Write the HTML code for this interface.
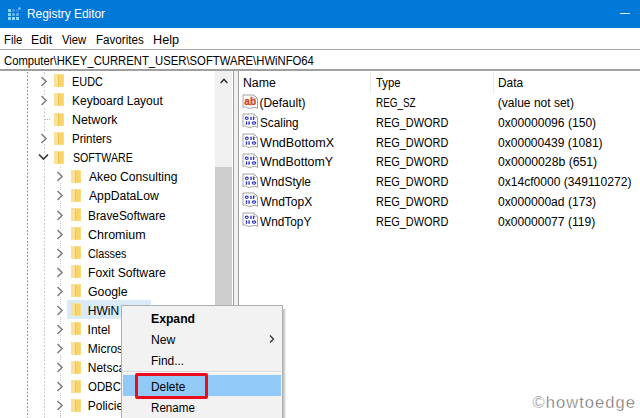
<!DOCTYPE html>
<html><head><meta charset="utf-8"><style>
html,body{margin:0;padding:0;}
body{width:640px;height:418px;overflow:hidden;position:relative;background:#fff;font-family:"Liberation Sans",sans-serif;}
.t{position:absolute;font-family:"Liberation Sans",sans-serif;font-size:12px;line-height:14px;white-space:nowrap;transform-origin:0 0;}
</style></head><body>
<div style="position:absolute;left:0px;top:0px;width:640px;height:28px;background:#0078d7;"></div>
<svg style="position:absolute;left:7px;top:7px" width="18" height="16" viewBox="0 0 18 16"><rect x="1" y="2" width="3" height="3" fill="#86d4fd"/><rect x="5" y="2" width="3" height="3" fill="#3a96e4"/><rect x="9" y="2" width="3" height="3" fill="#2c88de"/><rect x="1" y="6" width="3" height="3" fill="#86d4fd"/><rect x="5" y="6" width="3" height="3" fill="#56acec"/><rect x="9" y="6" width="3" height="3" fill="#56acec"/><rect x="1" y="10" width="3" height="3" fill="#8ad8ff"/><rect x="5" y="10" width="3" height="3" fill="#8ad8ff"/><rect x="9" y="10" width="3" height="3" fill="#8ad8ff"/><circle cx="12.5" cy="1.5" r="1.3" fill="#7cc0f6"/></svg>
<div class="t" style="left:26.52px;top:7.30px;color:#fff;transform:scaleX(0.9922);">Registry Editor</div>
<div style="position:absolute;left:620px;top:13px;width:10px;height:1px;background:#dff2ff;"></div>
<div class="t" style="left:3.77px;top:33.00px;color:#000;transform:scaleX(0.9428);">File</div>
<div class="t" style="left:30.90px;top:33.00px;color:#000;transform:scaleX(1.0201);">Edit</div>
<div class="t" style="left:61.55px;top:33.00px;color:#000;transform:scaleX(0.9390);">View</div>
<div class="t" style="left:95.75px;top:33.00px;color:#000;transform:scaleX(0.9681);">Favorites</div>
<div class="t" style="left:152.76px;top:33.00px;color:#000;transform:scaleX(1.0564);">Help</div>
<div style="position:absolute;left:0px;top:49px;width:640px;height:1px;background:#a9a9a9;"></div>
<div class="t" style="left:4.43px;top:54.00px;color:#000;transform:scaleX(0.9402);">Computer\HKEY_CURRENT_USER\SOFTWARE\HWiNFO64</div>
<div style="position:absolute;left:0px;top:69px;width:640px;height:2px;background:#a0a0a0;"></div>
<div style="position:absolute;left:27px;top:71px;width:1px;height:347px;background:linear-gradient(to bottom,transparent 0 0.5px,#8c8c8c 0.5px 2.5px,transparent 2.5px) 0 0/1px 3.6px repeat-y"></div>
<div style="position:absolute;left:44px;top:71px;width:1px;height:347px;background:linear-gradient(to bottom,transparent 0 1px,#c4c4c4 1px 2.5px,transparent 2.5px) 0 0/1px 3.6px repeat-y"></div>
<div style="position:absolute;left:60px;top:167px;width:1px;height:251px;background:repeating-linear-gradient(to bottom,#c4c4c4 0 1px,transparent 1px 2px)"></div>
<div style="position:absolute;left:45px;top:119px;width:6px;height:1px;background:repeating-linear-gradient(to right,#b0b0b0 0 1px,transparent 1px 2px)"></div>
<svg style="position:absolute;left:40px;top:76.0px" width="8" height="11" viewBox="0 0 8 11"><rect width="8" height="11" fill="#fff"/><path d="M1.5 1 L6 5.5 L1.5 10" fill="none" stroke="#808080" stroke-width="1.6"/></svg>
<svg style="position:absolute;left:54px;top:74.4px" width="10" height="14" viewBox="0 0 10 14"><rect x="0" y="0" width="10" height="13" fill="#fbe196"/><rect x="4" y="1" width="5.5" height="11.5" fill="#f7d569"/><rect x="4" y="1" width="1" height="11.5" fill="#ecc55a"/></svg>
<div class="t" style="left:72.11px;top:75.00px;color:#000;transform:scaleX(0.9075);">EUDC</div>
<svg style="position:absolute;left:40px;top:95.08px" width="8" height="11" viewBox="0 0 8 11"><rect width="8" height="11" fill="#fff"/><path d="M1.5 1 L6 5.5 L1.5 10" fill="none" stroke="#808080" stroke-width="1.6"/></svg>
<svg style="position:absolute;left:54px;top:93.48px" width="10" height="14" viewBox="0 0 10 14"><rect x="0" y="0" width="10" height="13" fill="#fbe196"/><rect x="4" y="1" width="5.5" height="11.5" fill="#f7d569"/><rect x="4" y="1" width="1" height="11.5" fill="#ecc55a"/></svg>
<div class="t" style="left:72.02px;top:94.08px;color:#000;">Keyboard Layout</div>
<svg style="position:absolute;left:54px;top:112.56px" width="10" height="14" viewBox="0 0 10 14"><rect x="0" y="0" width="10" height="13" fill="#fbe196"/><rect x="4" y="1" width="5.5" height="11.5" fill="#f7d569"/><rect x="4" y="1" width="1" height="11.5" fill="#ecc55a"/></svg>
<div class="t" style="left:71.98px;top:113.16px;color:#000;transform:scaleX(1.0339);">Network</div>
<svg style="position:absolute;left:40px;top:133.24px" width="8" height="11" viewBox="0 0 8 11"><rect width="8" height="11" fill="#fff"/><path d="M1.5 1 L6 5.5 L1.5 10" fill="none" stroke="#808080" stroke-width="1.6"/></svg>
<svg style="position:absolute;left:54px;top:131.64000000000001px" width="10" height="14" viewBox="0 0 10 14"><rect x="0" y="0" width="10" height="13" fill="#fbe196"/><rect x="4" y="1" width="5.5" height="11.5" fill="#f7d569"/><rect x="4" y="1" width="1" height="11.5" fill="#ecc55a"/></svg>
<div class="t" style="left:72.06px;top:132.24px;color:#000;transform:scaleX(0.9593);">Printers</div>
<svg style="position:absolute;left:38px;top:152.82px" width="11" height="8" viewBox="0 0 11 8"><rect width="11" height="8" fill="#fff"/><path d="M1 1.5 L5.5 6 L10 1.5" fill="none" stroke="#333" stroke-width="1.6"/></svg>
<svg style="position:absolute;left:54px;top:150.72px" width="10" height="14" viewBox="0 0 10 14"><rect x="0" y="0" width="10" height="13" fill="#fbe196"/><rect x="4" y="1" width="5.5" height="11.5" fill="#f7d569"/><rect x="4" y="1" width="1" height="11.5" fill="#ecc55a"/></svg>
<div class="t" style="left:72.52px;top:151.32px;color:#000;transform:scaleX(0.8859);">SOFTWARE</div>
<svg style="position:absolute;left:56px;top:171.39999999999998px" width="8" height="11" viewBox="0 0 8 11"><rect width="8" height="11" fill="#fff"/><path d="M1.5 1 L6 5.5 L1.5 10" fill="none" stroke="#808080" stroke-width="1.6"/></svg>
<svg style="position:absolute;left:71px;top:169.79999999999998px" width="10" height="14" viewBox="0 0 10 14"><rect x="0" y="0" width="10" height="13" fill="#fbe196"/><rect x="4" y="1" width="5.5" height="11.5" fill="#f7d569"/><rect x="4" y="1" width="1" height="11.5" fill="#ecc55a"/></svg>
<div class="t" style="left:88.68px;top:170.40px;color:#000;transform:scaleX(1.0128);">Akeo Consulting</div>
<svg style="position:absolute;left:56px;top:190.48px" width="8" height="11" viewBox="0 0 8 11"><rect width="8" height="11" fill="#fff"/><path d="M1.5 1 L6 5.5 L1.5 10" fill="none" stroke="#808080" stroke-width="1.6"/></svg>
<svg style="position:absolute;left:71px;top:188.88px" width="10" height="14" viewBox="0 0 10 14"><rect x="0" y="0" width="10" height="13" fill="#fbe196"/><rect x="4" y="1" width="5.5" height="11.5" fill="#f7d569"/><rect x="4" y="1" width="1" height="11.5" fill="#ecc55a"/></svg>
<div class="t" style="left:88.68px;top:189.48px;color:#000;transform:scaleX(1.0143);">AppDataLow</div>
<svg style="position:absolute;left:56px;top:209.56px" width="8" height="11" viewBox="0 0 8 11"><rect width="8" height="11" fill="#fff"/><path d="M1.5 1 L6 5.5 L1.5 10" fill="none" stroke="#808080" stroke-width="1.6"/></svg>
<svg style="position:absolute;left:71px;top:207.96px" width="10" height="14" viewBox="0 0 10 14"><rect x="0" y="0" width="10" height="13" fill="#fbe196"/><rect x="4" y="1" width="5.5" height="11.5" fill="#f7d569"/><rect x="4" y="1" width="1" height="11.5" fill="#ecc55a"/></svg>
<div class="t" style="left:87.73px;top:208.56px;color:#000;transform:scaleX(0.9872);">BraveSoftware</div>
<svg style="position:absolute;left:56px;top:228.64px" width="8" height="11" viewBox="0 0 8 11"><rect width="8" height="11" fill="#fff"/><path d="M1.5 1 L6 5.5 L1.5 10" fill="none" stroke="#808080" stroke-width="1.6"/></svg>
<svg style="position:absolute;left:71px;top:227.04px" width="10" height="14" viewBox="0 0 10 14"><rect x="0" y="0" width="10" height="13" fill="#fbe196"/><rect x="4" y="1" width="5.5" height="11.5" fill="#f7d569"/><rect x="4" y="1" width="1" height="11.5" fill="#ecc55a"/></svg>
<div class="t" style="left:88.07px;top:227.64px;color:#000;transform:scaleX(1.0419);">Chromium</div>
<svg style="position:absolute;left:56px;top:247.71999999999997px" width="8" height="11" viewBox="0 0 8 11"><rect width="8" height="11" fill="#fff"/><path d="M1.5 1 L6 5.5 L1.5 10" fill="none" stroke="#808080" stroke-width="1.6"/></svg>
<svg style="position:absolute;left:71px;top:246.11999999999998px" width="10" height="14" viewBox="0 0 10 14"><rect x="0" y="0" width="10" height="13" fill="#fbe196"/><rect x="4" y="1" width="5.5" height="11.5" fill="#f7d569"/><rect x="4" y="1" width="1" height="11.5" fill="#ecc55a"/></svg>
<div class="t" style="left:88.15px;top:246.72px;color:#000;transform:scaleX(0.9006);">Classes</div>
<svg style="position:absolute;left:56px;top:266.79999999999995px" width="8" height="11" viewBox="0 0 8 11"><rect width="8" height="11" fill="#fff"/><path d="M1.5 1 L6 5.5 L1.5 10" fill="none" stroke="#808080" stroke-width="1.6"/></svg>
<svg style="position:absolute;left:71px;top:265.19999999999993px" width="10" height="14" viewBox="0 0 10 14"><rect x="0" y="0" width="10" height="13" fill="#fbe196"/><rect x="4" y="1" width="5.5" height="11.5" fill="#f7d569"/><rect x="4" y="1" width="1" height="11.5" fill="#ecc55a"/></svg>
<div class="t" style="left:87.70px;top:265.80px;color:#000;transform:scaleX(1.0136);">Foxit Software</div>
<svg style="position:absolute;left:56px;top:285.88px" width="8" height="11" viewBox="0 0 8 11"><rect width="8" height="11" fill="#fff"/><path d="M1.5 1 L6 5.5 L1.5 10" fill="none" stroke="#808080" stroke-width="1.6"/></svg>
<svg style="position:absolute;left:71px;top:284.28px" width="10" height="14" viewBox="0 0 10 14"><rect x="0" y="0" width="10" height="13" fill="#fbe196"/><rect x="4" y="1" width="5.5" height="11.5" fill="#f7d569"/><rect x="4" y="1" width="1" height="11.5" fill="#ecc55a"/></svg>
<div class="t" style="left:88.08px;top:284.88px;color:#000;transform:scaleX(1.0251);">Google</div>
<div style="position:absolute;left:67px;top:300px;width:84px;height:19px;background:#d9ebf9;"></div>
<svg style="position:absolute;left:56px;top:304.96px" width="8" height="11" viewBox="0 0 8 11"><rect width="8" height="11" fill="#fff"/><path d="M1.5 1 L6 5.5 L1.5 10" fill="none" stroke="#808080" stroke-width="1.6"/></svg>
<svg style="position:absolute;left:71px;top:303.35999999999996px" width="10" height="14" viewBox="0 0 10 14"><rect x="0" y="0" width="10" height="13" fill="#fbe196"/><rect x="4" y="1" width="5.5" height="11.5" fill="#f7d569"/><rect x="4" y="1" width="1" height="11.5" fill="#ecc55a"/></svg>
<div class="t" style="left:87.72px;top:303.96px;color:#000;">HWiN</div>
<svg style="position:absolute;left:56px;top:324.03999999999996px" width="8" height="11" viewBox="0 0 8 11"><rect width="8" height="11" fill="#fff"/><path d="M1.5 1 L6 5.5 L1.5 10" fill="none" stroke="#808080" stroke-width="1.6"/></svg>
<svg style="position:absolute;left:71px;top:322.43999999999994px" width="10" height="14" viewBox="0 0 10 14"><rect x="0" y="0" width="10" height="13" fill="#fbe196"/><rect x="4" y="1" width="5.5" height="11.5" fill="#f7d569"/><rect x="4" y="1" width="1" height="11.5" fill="#ecc55a"/></svg>
<div class="t" style="left:87.59px;top:323.04px;color:#000;">Intel</div>
<svg style="position:absolute;left:56px;top:343.12px" width="8" height="11" viewBox="0 0 8 11"><rect width="8" height="11" fill="#fff"/><path d="M1.5 1 L6 5.5 L1.5 10" fill="none" stroke="#808080" stroke-width="1.6"/></svg>
<svg style="position:absolute;left:71px;top:341.52px" width="10" height="14" viewBox="0 0 10 14"><rect x="0" y="0" width="10" height="13" fill="#fbe196"/><rect x="4" y="1" width="5.5" height="11.5" fill="#f7d569"/><rect x="4" y="1" width="1" height="11.5" fill="#ecc55a"/></svg>
<div class="t" style="left:87.72px;top:342.12px;color:#000;">Microsoft</div>
<svg style="position:absolute;left:56px;top:362.2px" width="8" height="11" viewBox="0 0 8 11"><rect width="8" height="11" fill="#fff"/><path d="M1.5 1 L6 5.5 L1.5 10" fill="none" stroke="#808080" stroke-width="1.6"/></svg>
<svg style="position:absolute;left:71px;top:360.59999999999997px" width="10" height="14" viewBox="0 0 10 14"><rect x="0" y="0" width="10" height="13" fill="#fbe196"/><rect x="4" y="1" width="5.5" height="11.5" fill="#f7d569"/><rect x="4" y="1" width="1" height="11.5" fill="#ecc55a"/></svg>
<div class="t" style="left:87.72px;top:361.20px;color:#000;">Netscape</div>
<svg style="position:absolute;left:56px;top:381.28px" width="8" height="11" viewBox="0 0 8 11"><rect width="8" height="11" fill="#fff"/><path d="M1.5 1 L6 5.5 L1.5 10" fill="none" stroke="#808080" stroke-width="1.6"/></svg>
<svg style="position:absolute;left:71px;top:379.67999999999995px" width="10" height="14" viewBox="0 0 10 14"><rect x="0" y="0" width="10" height="13" fill="#fbe196"/><rect x="4" y="1" width="5.5" height="11.5" fill="#f7d569"/><rect x="4" y="1" width="1" height="11.5" fill="#ecc55a"/></svg>
<div class="t" style="left:88.16px;top:380.28px;color:#000;transform:scaleX(0.9511);">ODBC</div>
<svg style="position:absolute;left:56px;top:400.35999999999996px" width="8" height="11" viewBox="0 0 8 11"><rect width="8" height="11" fill="#fff"/><path d="M1.5 1 L6 5.5 L1.5 10" fill="none" stroke="#808080" stroke-width="1.6"/></svg>
<svg style="position:absolute;left:71px;top:398.75999999999993px" width="10" height="14" viewBox="0 0 10 14"><rect x="0" y="0" width="10" height="13" fill="#fbe196"/><rect x="4" y="1" width="5.5" height="11.5" fill="#f7d569"/><rect x="4" y="1" width="1" height="11.5" fill="#ecc55a"/></svg>
<div class="t" style="left:87.72px;top:399.36px;color:#000;">Policies</div>
<svg style="position:absolute;left:56px;top:419.43999999999994px" width="8" height="11" viewBox="0 0 8 11"><rect width="8" height="11" fill="#fff"/><path d="M1.5 1 L6 5.5 L1.5 10" fill="none" stroke="#808080" stroke-width="1.6"/></svg>
<svg style="position:absolute;left:71px;top:417.8399999999999px" width="10" height="14" viewBox="0 0 10 14"><rect x="0" y="0" width="10" height="13" fill="#fbe196"/><rect x="4" y="1" width="5.5" height="11.5" fill="#f7d569"/><rect x="4" y="1" width="1" height="11.5" fill="#ecc55a"/></svg>
<div class="t" style="left:88.13px;top:418.44px;color:#000;">Qt</div>
<div style="position:absolute;left:215px;top:71px;width:17px;height:347px;background:#f0f0f0;"></div>
<div style="position:absolute;left:215px;top:167px;width:17px;height:251px;background:#cdcdcd;"></div>
<svg style="position:absolute;left:218px;top:77px" width="12" height="8" viewBox="0 0 12 8"><path d="M2.6 6 L6 2.4 L9.4 6" fill="none" stroke="#333" stroke-width="1.5"/></svg>
<div style="position:absolute;left:233px;top:71px;width:1px;height:347px;background:#a0a0a0;"></div>
<div style="position:absolute;left:234px;top:71px;width:4px;height:347px;background:#f0f0f0;"></div>
<div style="position:absolute;left:238px;top:71px;width:1px;height:347px;background:#a0a0a0;"></div>
<div class="t" style="left:242.79px;top:76.00px;color:#000;transform:scaleX(1.0232);">Name</div>
<div style="position:absolute;left:370px;top:72px;width:1px;height:22px;background:#ebebeb;"></div>
<div class="t" style="left:376.00px;top:76.00px;color:#000;transform:scaleX(0.9411);">Type</div>
<div style="position:absolute;left:493px;top:72px;width:1px;height:22px;background:#ebebeb;"></div>
<div class="t" style="left:498.03px;top:76.00px;color:#000;transform:scaleX(0.9892);">Data</div>
<svg style="position:absolute;left:241.5px;top:93.70px" width="17" height="17" viewBox="0 0 17 17"><path d="M1 1 H12 L15.5 4.5 V14.5 Q14 13.2 12.5 13.4 Q10 13.8 8 14.4 Q5.5 14.6 3.5 13 Q2.2 12.6 1 13.4 Z" fill="#fff" stroke="#a4a4a4" stroke-width="1"/><path d="M12 1 V4.5 H15.5" fill="none" stroke="#b8b8b8" stroke-width="0.8"/><text x="2.3" y="10.8" font-family="Liberation Sans" font-weight="bold" font-size="10.5" fill="#d0462a" stroke="#d0462a" stroke-width="0.3" textLength="12" lengthAdjust="spacingAndGlyphs">ab</text></svg>
<div class="t" style="left:259.46px;top:96.00px;color:#000;">(Default)</div>
<div class="t" style="left:375.89px;top:96.00px;color:#000;transform:scaleX(0.8231);">REG_SZ</div>
<div class="t" style="left:497.86px;top:96.00px;color:#000;">(value not set)</div>
<svg style="position:absolute;left:241.5px;top:113.40px" width="17" height="17" viewBox="0 0 17 17"><path d="M1 1 H12 L15.5 4.5 V14.5 Q14 13.2 12.5 13.4 Q10 13.8 8 14.4 Q5.5 14.6 3.5 13 Q2.2 12.6 1 13.4 Z" fill="#fff" stroke="#a4a4a4" stroke-width="1"/><path d="M12 1 V4.5 H15.5" fill="none" stroke="#b8b8b8" stroke-width="0.8"/><ellipse cx="4.75" cy="5.3" rx="1.5" ry="1.2" fill="none" stroke="#2f35c2" stroke-width="1.1"/><rect x="8.3" y="3.7" width="1.4" height="3.3" fill="#2f35c2"/><rect x="10.9" y="3.7" width="1.4" height="3.3" fill="#2f35c2"/><rect x="3.8" y="8.4" width="1.4" height="3.4" fill="#2f35c2"/><rect x="6.4" y="8.4" width="1.4" height="3.4" fill="#2f35c2"/><ellipse cx="12" cy="10.1" rx="1.75" ry="1.2" fill="none" stroke="#2f35c2" stroke-width="1.1"/></svg>
<div class="t" style="left:259.67px;top:116.00px;color:#000;transform:scaleX(0.9806);">Scaling</div>
<div class="t" style="left:375.80px;top:116.00px;color:#000;transform:scaleX(0.9116);">REG_DWORD</div>
<div class="t" style="left:498.13px;top:116.00px;color:#000;transform:scaleX(1.0073);">0x00000096 (150)</div>
<svg style="position:absolute;left:241.5px;top:133.10px" width="17" height="17" viewBox="0 0 17 17"><path d="M1 1 H12 L15.5 4.5 V14.5 Q14 13.2 12.5 13.4 Q10 13.8 8 14.4 Q5.5 14.6 3.5 13 Q2.2 12.6 1 13.4 Z" fill="#fff" stroke="#a4a4a4" stroke-width="1"/><path d="M12 1 V4.5 H15.5" fill="none" stroke="#b8b8b8" stroke-width="0.8"/><ellipse cx="4.75" cy="5.3" rx="1.5" ry="1.2" fill="none" stroke="#2f35c2" stroke-width="1.1"/><rect x="8.3" y="3.7" width="1.4" height="3.3" fill="#2f35c2"/><rect x="10.9" y="3.7" width="1.4" height="3.3" fill="#2f35c2"/><rect x="3.8" y="8.4" width="1.4" height="3.4" fill="#2f35c2"/><rect x="6.4" y="8.4" width="1.4" height="3.4" fill="#2f35c2"/><ellipse cx="12" cy="10.1" rx="1.75" ry="1.2" fill="none" stroke="#2f35c2" stroke-width="1.1"/></svg>
<div class="t" style="left:260.14px;top:136.00px;color:#000;transform:scaleX(1.0485);">WndBottomX</div>
<div class="t" style="left:375.80px;top:136.00px;color:#000;transform:scaleX(0.9116);">REG_DWORD</div>
<div class="t" style="left:498.13px;top:136.00px;color:#000;transform:scaleX(1.0051);">0x00000439 (1081)</div>
<svg style="position:absolute;left:241.5px;top:152.80px" width="17" height="17" viewBox="0 0 17 17"><path d="M1 1 H12 L15.5 4.5 V14.5 Q14 13.2 12.5 13.4 Q10 13.8 8 14.4 Q5.5 14.6 3.5 13 Q2.2 12.6 1 13.4 Z" fill="#fff" stroke="#a4a4a4" stroke-width="1"/><path d="M12 1 V4.5 H15.5" fill="none" stroke="#b8b8b8" stroke-width="0.8"/><ellipse cx="4.75" cy="5.3" rx="1.5" ry="1.2" fill="none" stroke="#2f35c2" stroke-width="1.1"/><rect x="8.3" y="3.7" width="1.4" height="3.3" fill="#2f35c2"/><rect x="10.9" y="3.7" width="1.4" height="3.3" fill="#2f35c2"/><rect x="3.8" y="8.4" width="1.4" height="3.4" fill="#2f35c2"/><rect x="6.4" y="8.4" width="1.4" height="3.4" fill="#2f35c2"/><ellipse cx="12" cy="10.1" rx="1.75" ry="1.2" fill="none" stroke="#2f35c2" stroke-width="1.1"/></svg>
<div class="t" style="left:260.15px;top:155.00px;color:#000;transform:scaleX(1.0344);">WndBottomY</div>
<div class="t" style="left:375.80px;top:155.00px;color:#000;transform:scaleX(0.9116);">REG_DWORD</div>
<div class="t" style="left:498.12px;top:155.00px;color:#000;transform:scaleX(1.0177);">0x0000028b (651)</div>
<svg style="position:absolute;left:241.5px;top:172.50px" width="17" height="17" viewBox="0 0 17 17"><path d="M1 1 H12 L15.5 4.5 V14.5 Q14 13.2 12.5 13.4 Q10 13.8 8 14.4 Q5.5 14.6 3.5 13 Q2.2 12.6 1 13.4 Z" fill="#fff" stroke="#a4a4a4" stroke-width="1"/><path d="M12 1 V4.5 H15.5" fill="none" stroke="#b8b8b8" stroke-width="0.8"/><ellipse cx="4.75" cy="5.3" rx="1.5" ry="1.2" fill="none" stroke="#2f35c2" stroke-width="1.1"/><rect x="8.3" y="3.7" width="1.4" height="3.3" fill="#2f35c2"/><rect x="10.9" y="3.7" width="1.4" height="3.3" fill="#2f35c2"/><rect x="3.8" y="8.4" width="1.4" height="3.4" fill="#2f35c2"/><rect x="6.4" y="8.4" width="1.4" height="3.4" fill="#2f35c2"/><ellipse cx="12" cy="10.1" rx="1.75" ry="1.2" fill="none" stroke="#2f35c2" stroke-width="1.1"/></svg>
<div class="t" style="left:260.15px;top:175.00px;color:#000;transform:scaleX(0.9908);">WndStyle</div>
<div class="t" style="left:375.80px;top:175.00px;color:#000;transform:scaleX(0.9116);">REG_DWORD</div>
<div class="t" style="left:498.13px;top:175.00px;color:#000;transform:scaleX(1.0066);">0x14cf0000 (349110272)</div>
<svg style="position:absolute;left:241.5px;top:192.20px" width="17" height="17" viewBox="0 0 17 17"><path d="M1 1 H12 L15.5 4.5 V14.5 Q14 13.2 12.5 13.4 Q10 13.8 8 14.4 Q5.5 14.6 3.5 13 Q2.2 12.6 1 13.4 Z" fill="#fff" stroke="#a4a4a4" stroke-width="1"/><path d="M12 1 V4.5 H15.5" fill="none" stroke="#b8b8b8" stroke-width="0.8"/><ellipse cx="4.75" cy="5.3" rx="1.5" ry="1.2" fill="none" stroke="#2f35c2" stroke-width="1.1"/><rect x="8.3" y="3.7" width="1.4" height="3.3" fill="#2f35c2"/><rect x="10.9" y="3.7" width="1.4" height="3.3" fill="#2f35c2"/><rect x="3.8" y="8.4" width="1.4" height="3.4" fill="#2f35c2"/><rect x="6.4" y="8.4" width="1.4" height="3.4" fill="#2f35c2"/><ellipse cx="12" cy="10.1" rx="1.75" ry="1.2" fill="none" stroke="#2f35c2" stroke-width="1.1"/></svg>
<div class="t" style="left:260.15px;top:195.00px;color:#000;">WndTopX</div>
<div class="t" style="left:375.80px;top:195.00px;color:#000;transform:scaleX(0.9116);">REG_DWORD</div>
<div class="t" style="left:498.13px;top:195.00px;color:#000;transform:scaleX(1.0073);">0x000000ad (173)</div>
<svg style="position:absolute;left:241.5px;top:211.90px" width="17" height="17" viewBox="0 0 17 17"><path d="M1 1 H12 L15.5 4.5 V14.5 Q14 13.2 12.5 13.4 Q10 13.8 8 14.4 Q5.5 14.6 3.5 13 Q2.2 12.6 1 13.4 Z" fill="#fff" stroke="#a4a4a4" stroke-width="1"/><path d="M12 1 V4.5 H15.5" fill="none" stroke="#b8b8b8" stroke-width="0.8"/><ellipse cx="4.75" cy="5.3" rx="1.5" ry="1.2" fill="none" stroke="#2f35c2" stroke-width="1.1"/><rect x="8.3" y="3.7" width="1.4" height="3.3" fill="#2f35c2"/><rect x="10.9" y="3.7" width="1.4" height="3.3" fill="#2f35c2"/><rect x="3.8" y="8.4" width="1.4" height="3.4" fill="#2f35c2"/><rect x="6.4" y="8.4" width="1.4" height="3.4" fill="#2f35c2"/><ellipse cx="12" cy="10.1" rx="1.75" ry="1.2" fill="none" stroke="#2f35c2" stroke-width="1.1"/></svg>
<div class="t" style="left:260.15px;top:215.00px;color:#000;transform:scaleX(0.9861);">WndTopY</div>
<div class="t" style="left:375.80px;top:215.00px;color:#000;transform:scaleX(0.9116);">REG_DWORD</div>
<div class="t" style="left:498.13px;top:215.00px;color:#000;transform:scaleX(1.0073);">0x00000077 (119)</div>
<div class="t" style="left:532.5px;top:393px;font-size:16.5px;line-height:18px;color:#6a6a6a;letter-spacing:1.05px;-webkit-text-stroke:0.35px #fff">&copy;howtoedge</div>
<div style="position:absolute;left:283px;top:309px;width:3px;height:109px;background:linear-gradient(to right,rgba(0,0,0,0.28),rgba(0,0,0,0.04));"></div>
<div style="position:absolute;left:121px;top:305px;width:162px;height:113px;background:#f2f2f2;box-sizing:border-box;border:1px solid #b0b0b0;border-bottom:none"></div>
<div class="t" style="left:150.78px;top:312.00px;color:#000;transform:scaleX(1.0156);font-weight:bold;">Expand</div>
<div class="t" style="left:150.60px;top:333.00px;color:#000;transform:scaleX(1.0151);">New</div>
<svg style="position:absolute;left:268px;top:334px" width="8" height="10" viewBox="0 0 8 10"><path d="M2 1.5 L5.5 5 L2 8.5" fill="none" stroke="#333" stroke-width="1.3"/></svg>
<div class="t" style="left:150.62px;top:354.00px;color:#000;transform:scaleX(0.9947);">Find...</div>
<div style="position:absolute;left:123px;top:371px;width:158px;height:1px;background:#dcdad8;"></div>
<div style="position:absolute;left:123px;top:372px;width:158px;height:1px;background:#fcfcfc;"></div>
<div style="position:absolute;left:123px;top:375px;width:158px;height:21px;background:#91c9f7;"></div>
<div class="t" style="left:151.03px;top:380.00px;color:#000;transform:scaleX(0.9888);">Delete</div>
<div class="t" style="left:150.65px;top:401.00px;color:#000;transform:scaleX(0.9672);">Rename</div>
<div style="position:absolute;left:135px;top:373px;width:73px;height:26px;background:transparent;box-sizing:border-box;border:3px solid #ec0c1c;border-radius:2px"></div>
</body></html>
